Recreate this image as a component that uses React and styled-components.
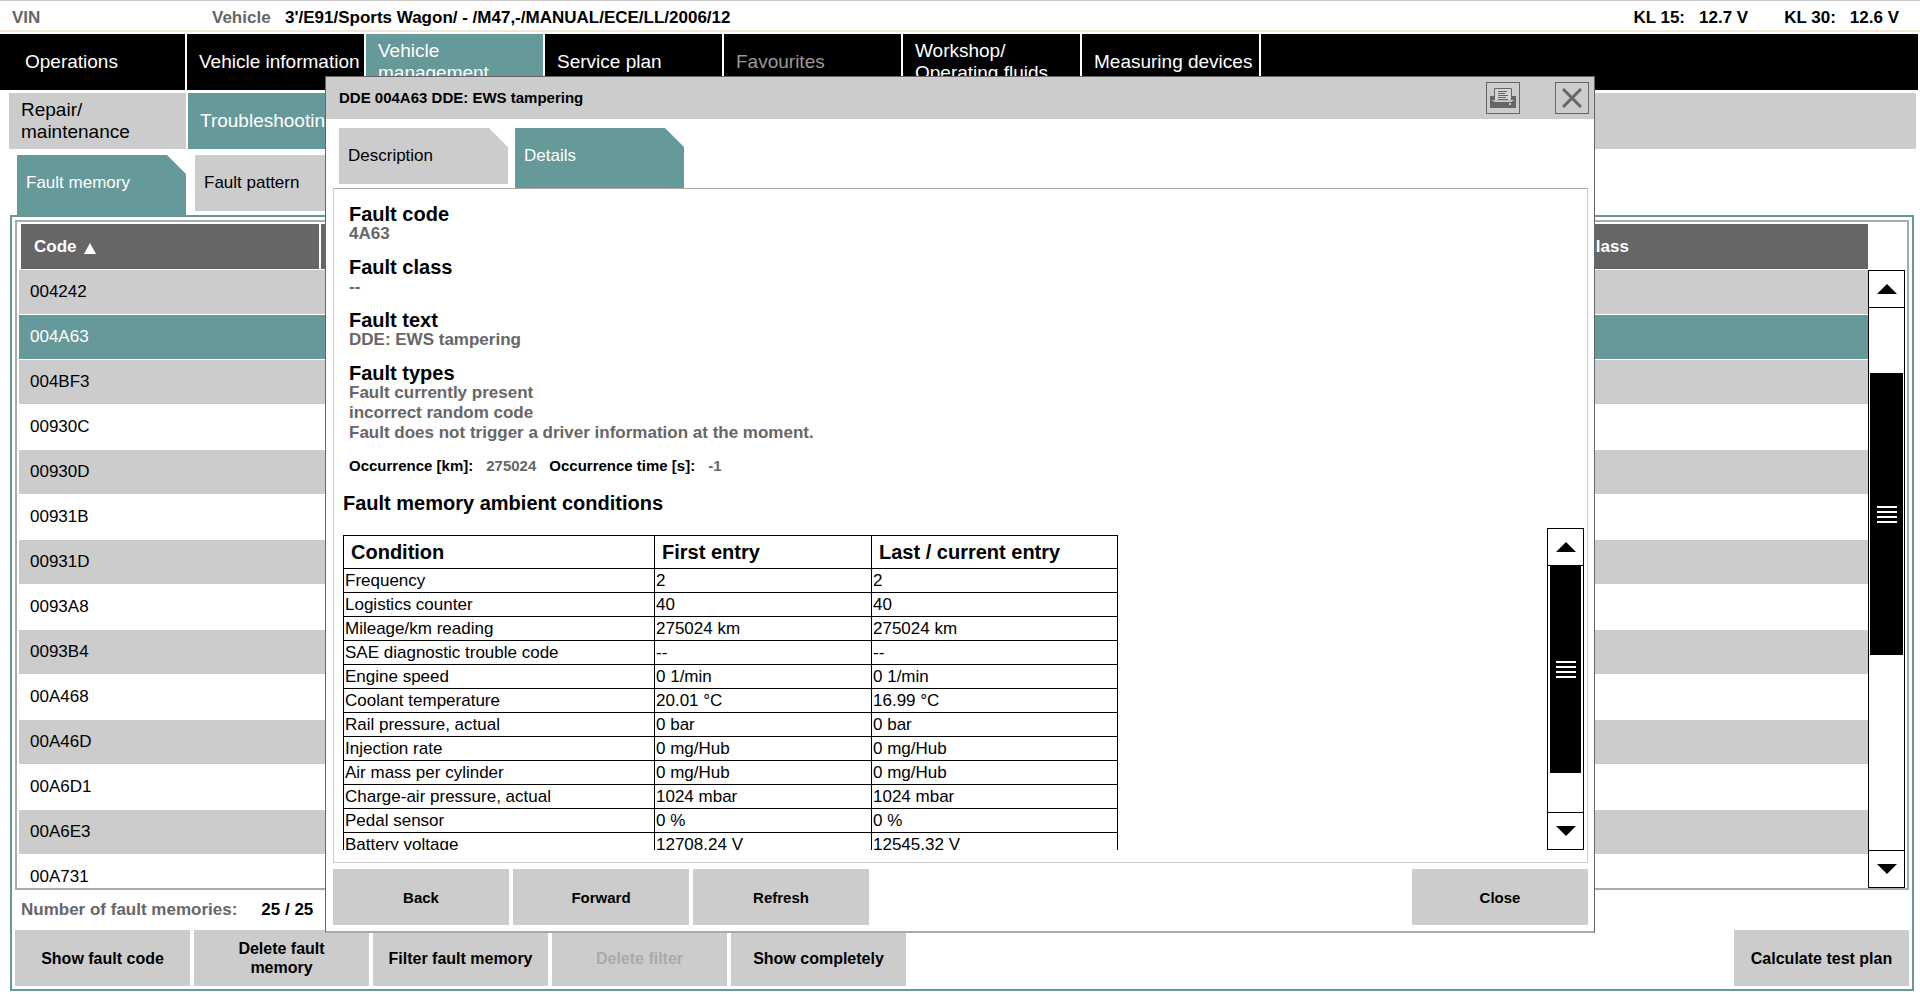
import React from 'react';
import styled, { createGlobalStyle, css } from 'styled-components';

const mainTabs = [
  { label: 'Operations' },
  { label: 'Vehicle information' },
  { label: 'Vehicle management', active: true },
  { label: 'Service plan' },
  { label: 'Favourites', disabled: true },
  { label: 'Workshop/ Operating fluids' },
  { label: 'Measuring devices' },
];

const faultCodes = [
  '004242',
  '004A63',
  '004BF3',
  '00930C',
  '00930D',
  '00931B',
  '00931D',
  '0093A8',
  '0093B4',
  '00A468',
  '00A46D',
  '00A6D1',
  '00A6E3',
  '00A731',
];

const conditions = [
  ['Frequency', '2', '2'],
  ['Logistics counter', '40', '40'],
  ['Mileage/km reading', '275024 km', '275024 km'],
  ['SAE diagnostic trouble code', '--', '--'],
  ['Engine speed', '0 1/min', '0 1/min'],
  ['Coolant temperature', '20.01 °C', '16.99 °C'],
  ['Rail pressure, actual', '0 bar', '0 bar'],
  ['Injection rate', '0 mg/Hub', '0 mg/Hub'],
  ['Air mass per cylinder', '0 mg/Hub', '0 mg/Hub'],
  ['Charge-air pressure, actual', '1024 mbar', '1024 mbar'],
  ['Pedal sensor', '0 %', '0 %'],
  ['Battery voltage', '12708.24 V', '12545.32 V'],
];

const faultDetails = [
  { title: 'Fault code', lines: ['4A63'] },
  { title: 'Fault class', lines: ['--'] },
  { title: 'Fault text', lines: ['DDE: EWS tampering'] },
  {
    title: 'Fault types',
    lines: [
      'Fault currently present',
      'incorrect random code',
      'Fault does not trigger a driver information at the moment.',
    ],
  },
];

function ScrollBar({ before, thumb, after, inset }) {
  return (
    <ScrollTrack>
      <ScrollButton aria-label="Scroll up">
        <svg width="20" height="10" viewBox="0 0 20 10">
          <path d="M10 0 L20 10 H0 Z" />
        </svg>
      </ScrollButton>
      <ScrollLane $inset={inset}>
        <ScrollSpace $size={before} />
        <ScrollThumb $size={thumb}>
          <svg width="20" height="19" viewBox="0 0 20 19">
            <path
              d="M0 2 H20 M0 7 H20 M0 12 H20 M0 17 H20"
              stroke="#fff"
              strokeWidth="2"
            />
          </svg>
        </ScrollThumb>
        <ScrollSpace $size={after} />
      </ScrollLane>
      <ScrollButton $bottom aria-label="Scroll down">
        <svg width="20" height="10" viewBox="0 0 20 10">
          <path d="M0 0 H20 L10 10 Z" />
        </svg>
      </ScrollButton>
    </ScrollTrack>
  );
}

function FaultDialog() {
  return (
    <Overlay>
      <Dialog role="dialog" aria-labelledby="dialog-title">
        <DialogHeader>
          <DialogTitle id="dialog-title">
            DDE 004A63 DDE: EWS tampering
          </DialogTitle>
          <IconButton aria-label="Print">
            <svg width="26" height="20" viewBox="0 0 26 20">
              <path d="M0 8 H4 V14 H22 V8 H26 V20 H0 Z" fill="#666" />
              <path
                d="M4.5 0.5 H21.5 V12.5 H4.5 Z"
                fill="#d4d4d4"
                stroke="#666"
              />
              <path d="M2 12.5 H24" stroke="#bbb" />
              <path
                d="M8 3.5 H17 M8 5.5 H15 M8 7.5 H18 M8 9.5 H16 M8 11.5 H18"
                stroke="#666"
              />
              <rect x="19" y="15" width="2" height="2" fill="#ccc" />
            </svg>
          </IconButton>
          <IconButton aria-label="Close dialog">
            <svg width="20" height="20" viewBox="0 0 20 20">
              <path
                d="M1 1 L19 19 M19 1 L1 19"
                stroke="#666"
                strokeWidth="3"
              />
            </svg>
          </IconButton>
        </DialogHeader>
        <DialogTabs>
          <CornerTab>Description</CornerTab>
          <CornerTab $active>Details</CornerTab>
        </DialogTabs>
        <DialogBody>
          {faultDetails.map((el) => (
            <FaultDetail key={el.title}>
              <DetailTitle>{el.title}</DetailTitle>
              {el.lines.map((line) => (
                <DetailLine key={line}>{line}</DetailLine>
              ))}
            </FaultDetail>
          ))}
          <Occurrence>
            <dt>Occurrence [km]:</dt>
            <dd>275024</dd>
            <dt>Occurrence time [s]:</dt>
            <dd>-1</dd>
          </Occurrence>
          <ConditionTitle>Fault memory ambient conditions</ConditionTitle>
          <ConditionArea>
            <ConditionScroll>
              <ConditionTable>
                <thead>
                  <tr>
                    <th>Condition</th>
                    <th>First entry</th>
                    <th>Last / current entry</th>
                  </tr>
                </thead>
                <tbody>
                  {conditions.map(([name, first, last]) => (
                    <tr key={name}>
                      <td>{name}</td>
                      <td>{first}</td>
                      <td>{last}</td>
                    </tr>
                  ))}
                </tbody>
              </ConditionTable>
            </ConditionScroll>
            <ScrollBar before={0} thumb={209} after={39} inset />
          </ConditionArea>
        </DialogBody>
        <DialogFooter>
          <DialogButton>Back</DialogButton>
          <DialogButton>Forward</DialogButton>
          <DialogButton>Refresh</DialogButton>
          <DialogButton $last>Close</DialogButton>
        </DialogFooter>
      </Dialog>
    </Overlay>
  );
}

function App() {
  return (
    <Page>
      <GlobalStyle />
      <InfoBar>
        <InfoLabel $wide>VIN</InfoLabel>
        <InfoLabel>Vehicle</InfoLabel>
        <InfoValue>
          3'/E91/Sports Wagon/ - /M47,-/MANUAL/ECE/LL/2006/12
        </InfoValue>
        <Voltages>
          <Voltage>
            <span>KL 15:</span>
            <span>12.7 V</span>
          </Voltage>
          <Voltage>
            <span>KL 30:</span>
            <span>12.6 V</span>
          </Voltage>
        </Voltages>
      </InfoBar>

      <MainNav>
        {mainTabs.map((el) => (
          <MainTab key={el.label} $active={el.active} disabled={el.disabled}>
            {el.label}
          </MainTab>
        ))}
        <MainNavRest />
      </MainNav>

      <SubNav>
        <SubTab>Repair/ maintenance</SubTab>
        <SubTab $active>Troubleshooting</SubTab>
        <SubNavRest />
      </SubNav>

      <PageTabs>
        <CornerTab $active>Fault memory</CornerTab>
        <CornerTab>Fault pattern</CornerTab>
      </PageTabs>

      <Panel>
        <ListFrame>
          <ListScroll>
            <FaultTable>
              <thead>
                <tr>
                  <th>
                    Code
                    <svg width="12" height="11" viewBox="0 0 12 11">
                      <path d="M6 0 L12 11 H0 Z" fill="#fff" />
                    </svg>
                  </th>
                  <th />
                  <th>Fault class</th>
                </tr>
              </thead>
              <tbody>
                {faultCodes.map((code) => (
                  <FaultRow key={code} $selected={code === '004A63'}>
                    <td>{code}</td>
                    <td />
                    <td />
                  </FaultRow>
                ))}
              </tbody>
            </FaultTable>
          </ListScroll>
          <ListScrollBar>
            <ScrollBar before={65} thumb={282} after={195} />
          </ListScrollBar>
        </ListFrame>
        <CountRow>
          <span>Number of fault memories:</span>
          <strong>25 / 25</strong>
        </CountRow>
        <PanelFooter>
          <PanelButton>Show fault code</PanelButton>
          <PanelButton $wrap>Delete fault memory</PanelButton>
          <PanelButton>Filter fault memory</PanelButton>
          <PanelButton disabled>Delete filter</PanelButton>
          <PanelButton>Show completely</PanelButton>
          <PanelButton $last>Calculate test plan</PanelButton>
        </PanelFooter>
      </Panel>

      <FaultDialog />
    </Page>
  );
}

export default App;

const teal = '#669999';
const lightGray = '#cccccc';
const darkGray = '#666666';

const GlobalStyle = createGlobalStyle`
  * {
    box-sizing: border-box;
  }

  body {
    margin: 0;
    background: #fff;
    color: #000;
    font-family: 'Liberation Sans', Arial, sans-serif;
    font-size: 17px;
    line-height: 20px;
  }

  button {
    margin: 0;
    border: 0;
    padding: 0;
    font-family: inherit;
    color: inherit;
  }
`;

const Page = styled.div`
  display: flex;
  flex-direction: column;
  height: 100vh;
  overflow: hidden;
`;

const InfoBar = styled.header`
  display: flex;
  align-items: center;
  flex: none;
  height: 32px;
  margin-bottom: 2px;
  padding: 4px 21px 0 12px;
  border-top: 1px solid ${lightGray};
  border-bottom: 2px solid #efe6d5;
  font-weight: bold;
  white-space: nowrap;
`;

const InfoLabel = styled.span`
  width: ${({ $wide }) => ($wide ? '200px' : '73px')};
  color: ${darkGray};
`;

const InfoValue = styled.span`
  flex: 1;
`;

const Voltages = styled.div`
  display: flex;
  gap: 36px;
`;

const Voltage = styled.div`
  display: flex;
  gap: 14px;
`;

const MainNav = styled.nav`
  display: flex;
  flex: none;
  gap: 2px;
  height: 56px;
  margin-right: 2px;
`;

const navTab = css`
  flex: none;
  width: 177px;
  padding: 0 0 0 12px;
  font-size: 19px;
  line-height: 22px;
  text-align: left;
`;

const MainTab = styled.button`
  ${navTab}
  background: ${({ $active }) => ($active ? teal : '#000')};
  color: #fff;

  &:first-child {
    width: 185px;
    padding-left: 25px;
  }

  &:disabled {
    color: #999;
  }
`;

const MainNavRest = styled.div`
  flex: 1;
  background: #000;
`;

const SubNav = styled.nav`
  display: flex;
  flex: none;
  gap: 2px;
  height: 56px;
  margin: 3px 4px 0 9px;
`;

const SubTab = styled.button`
  ${navTab}
  background: ${({ $active }) => ($active ? teal : lightGray)};
  color: ${({ $active }) => ($active ? '#fff' : '#000')};
`;

const SubNavRest = styled.div`
  flex: 1;
  background: ${lightGray};
`;

const PageTabs = styled.div`
  display: flex;
  flex: none;
  align-items: flex-start;
  gap: 9px;
  margin: 6px 0 0 17px;
`;

const CornerTab = styled.button`
  width: 169px;
  height: ${({ $active }) => ($active ? '60px' : '56px')};
  padding: 0 9px ${({ $active }) => ($active ? '4px' : '0')};
  background: ${({ $active }) => ($active ? teal : lightGray)};
  color: ${({ $active }) => ($active ? '#fff' : '#000')};
  font-size: 17px;
  text-align: left;
  clip-path: polygon(0 0, calc(100% - 19px) 0, 100% 19px, 100% 100%, 0 100%);
`;

const Panel = styled.main`
  display: flex;
  flex-direction: column;
  flex: 1;
  min-height: 0;
  margin: 0 6px 3px 10px;
  padding: 3px;
  border: 2px solid ${teal};
`;

const ListFrame = styled.div`
  display: flex;
  flex: 1;
  min-height: 0;
  padding: 2px 2px 0;
  border: 2px solid #aaa;
`;

const ListScroll = styled.div`
  flex: 1;
  overflow: hidden;
`;

const FaultTable = styled.table`
  width: 100%;
  border-spacing: 0;
  table-layout: fixed;
  text-align: left;

  th {
    height: 46px;
    padding: 0 13px;
    border-left: 2px solid #fff;
    border-bottom: 1px solid #fff;
    background: ${darkGray};
    color: #fff;
  }

  th:first-child {
    width: 300px;
  }

  th:last-child {
    width: 342px;
  }

  th svg {
    margin-left: 7px;
    vertical-align: -2px;
  }
`;

const FaultRow = styled.tr`
  background: ${lightGray};

  &:nth-child(even) {
    background: #fff;
  }

  ${({ $selected }) =>
    $selected &&
    css`
      &:nth-child(even) {
        background: ${teal};
        color: #fff;
      }
    `}

  td {
    height: 45px;
    padding: 0 11px;
    border-bottom: 1px solid #fff;
  }
`;

const ListScrollBar = styled.div`
  display: flex;
  margin-top: 46px;
`;

const ScrollTrack = styled.div`
  display: flex;
  flex-direction: column;
  width: 37px;
  border: 1px solid #000;
`;

const ScrollButton = styled.button`
  display: flex;
  flex: none;
  align-items: center;
  justify-content: center;
  height: 37px;
  background: #fff;
  border-top: ${({ $bottom }) => ($bottom ? '1px solid #000' : '0')};
  border-bottom: ${({ $bottom }) => ($bottom ? '0' : '1px solid #000')};
`;

const ScrollLane = styled.div`
  display: flex;
  flex: 1;
  flex-direction: column;
  padding: 0 ${({ $inset }) => ($inset ? '2px' : '1px')};
`;

const ScrollSpace = styled.div`
  flex: ${({ $size }) => $size} 0 0;
`;

const ScrollThumb = styled.div`
  display: flex;
  flex: ${({ $size }) => $size} 0 0;
  align-items: center;
  justify-content: center;
  background: #000;
`;

const CountRow = styled.div`
  display: flex;
  align-items: center;
  flex: none;
  gap: 24px;
  height: 40px;
  padding-left: 6px;
  font-weight: bold;

  span {
    color: ${darkGray};
  }
`;

const PanelFooter = styled.div`
  display: flex;
  flex: none;
  gap: 4px;
`;

const PanelButton = styled.button`
  width: 175px;
  height: 56px;
  padding: 0 ${({ $wrap }) => ($wrap ? '16px' : '0')};
  margin-left: ${({ $last }) => ($last ? 'auto' : '0')};
  background: ${lightGray};
  font-size: 16px;
  font-weight: bold;
  line-height: 19px;

  &:disabled {
    color: #aaa;
  }
`;

const Overlay = styled.div`
  position: fixed;
  inset: 0;
  display: flex;
  padding: 76px 325px 61px;
`;

const Dialog = styled.section`
  display: flex;
  flex: 1;
  flex-direction: column;
  min-width: 0;
  padding-bottom: 6px;
  border: 1px solid ${darkGray};
  border-bottom: 2px solid #aaa;
  background: #fff;
`;

const DialogHeader = styled.header`
  display: flex;
  align-items: center;
  flex: none;
  gap: 35px;
  height: 42px;
  padding: 0 5px 0 13px;
  background: ${lightGray};
`;

const DialogTitle = styled.h1`
  flex: 1;
  margin: 0;
  font-size: 15px;
`;

const IconButton = styled.button`
  display: flex;
  align-items: center;
  justify-content: center;
  width: 34px;
  height: 32px;
  border: 1px solid ${darkGray};
  background: none;
`;

const DialogTabs = styled.div`
  display: flex;
  flex: none;
  align-items: flex-start;
  gap: 7px;
  margin: 9px 0 0 13px;
`;

const DialogBody = styled.div`
  display: flex;
  flex: 1;
  flex-direction: column;
  min-height: 0;
  margin: 0 6px 0 7px;
  padding: 15px 3px 12px 9px;
  border: 1px solid ${lightGray};
  border-top-color: #aaa;
`;

const FaultDetail = styled.section`
  flex: none;
  margin: 0 0 13px 6px;
`;

const blackTitle = css`
  margin: 0;
  font-size: 20px;
  font-weight: 900;
  line-height: 20px;
`;

const DetailTitle = styled.h2`
  ${blackTitle}
`;

const DetailLine = styled.p`
  margin: 0;
  color: ${darkGray};
  font-weight: bold;
`;

const Occurrence = styled.dl`
  display: flex;
  flex: none;
  gap: 13px;
  margin: 0 0 17px 6px;
  font-size: 15px;
  font-weight: bold;

  dd {
    margin: 0;
    color: ${darkGray};
  }
`;

const ConditionTitle = styled.h2`
  ${blackTitle}
  flex: none;
  margin-bottom: 15px;
`;

const ConditionArea = styled.div`
  display: flex;
  flex: 1;
  min-height: 0;
`;

const ConditionScroll = styled.div`
  flex: 1;
  padding-top: 7px;
  overflow: hidden;
`;

const ConditionTable = styled.table`
  width: 775px;
  border-collapse: collapse;
  table-layout: fixed;
  text-align: left;

  th {
    ${blackTitle}
    height: 33px;
    padding: 0 7px;
    border: 1px solid #000;
  }

  th:first-child {
    width: 311px;
  }

  th:nth-child(2) {
    width: 217px;
  }

  td {
    height: 24px;
    padding: 0 1px;
    border: 1px solid #000;
  }
`;

const DialogFooter = styled.footer`
  display: flex;
  flex: none;
  gap: 4px;
  margin: 6px 6px 0 7px;
`;

const DialogButton = styled.button`
  width: 176px;
  height: 56px;
  margin-left: ${({ $last }) => ($last ? 'auto' : '0')};
  background: ${lightGray};
  font-size: 15px;
  font-weight: bold;
`;
